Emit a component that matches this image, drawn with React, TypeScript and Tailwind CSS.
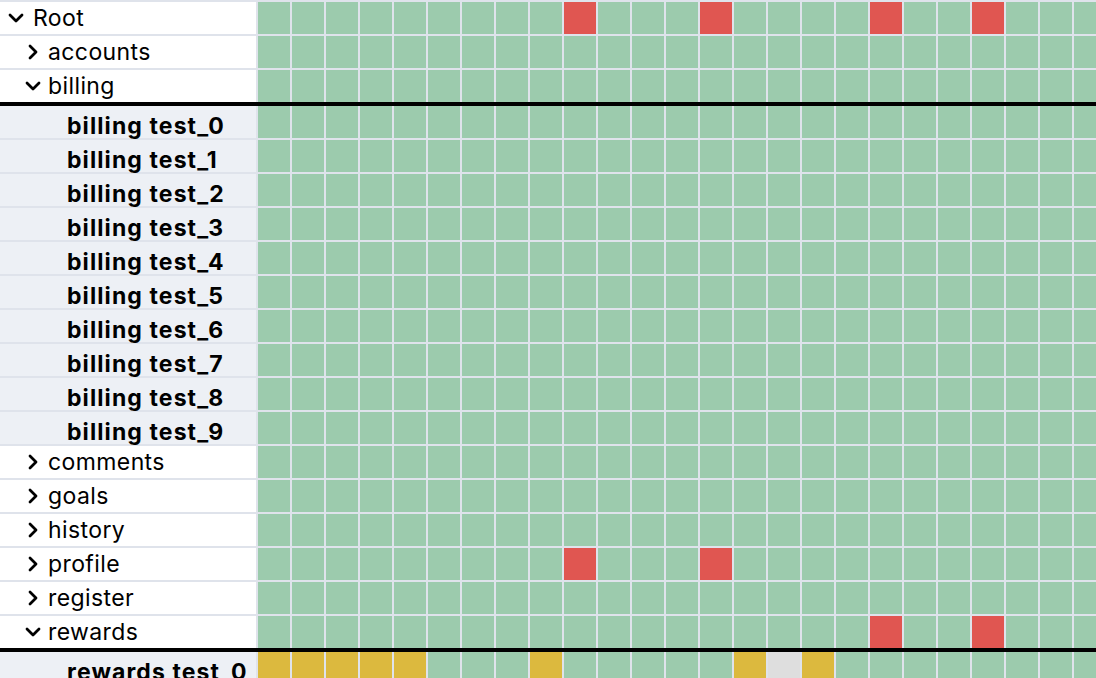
import { ChevronDown, ChevronRight } from 'lucide-react';

type Cell = 'g' | 'r' | 'y' | 'n';

interface Row {
  kind: 'node' | 'test' | 'sep';
  label?: string;
  depth?: number;
  open?: boolean;
  cells?: Cell[];
}

const COLS = 25;

const cellsWith = (marks: Record<number, Cell>): Cell[] =>
  Array.from({ length: COLS }, (_, i) => marks[i] ?? 'g');

const rows: Row[] = [
  { kind: 'node', label: 'Root', depth: 0, open: true, cells: cellsWith({ 9: 'r', 13: 'r', 18: 'r', 21: 'r' }) },
  { kind: 'node', label: 'accounts', depth: 1, cells: cellsWith({}) },
  { kind: 'node', label: 'billing', depth: 1, open: true, cells: cellsWith({}) },
  { kind: 'sep' },
  ...Array.from({ length: 10 }, (_, i) => ({
    kind: 'test' as const,
    label: `billing test_${i}`,
    cells: cellsWith({}),
  })),
  { kind: 'node', label: 'comments', depth: 1, cells: cellsWith({}) },
  { kind: 'node', label: 'goals', depth: 1, cells: cellsWith({}) },
  { kind: 'node', label: 'history', depth: 1, cells: cellsWith({}) },
  { kind: 'node', label: 'profile', depth: 1, cells: cellsWith({ 9: 'r', 13: 'r' }) },
  { kind: 'node', label: 'register', depth: 1, cells: cellsWith({}) },
  { kind: 'node', label: 'rewards', depth: 1, open: true, cells: cellsWith({ 18: 'r', 21: 'r' }) },
  { kind: 'sep' },
  {
    kind: 'test',
    label: 'rewards test_0',
    cells: cellsWith({ 0: 'y', 1: 'y', 2: 'y', 3: 'y', 4: 'y', 8: 'y', 14: 'y', 15: 'n', 16: 'y' }),
  },
];

const cellColor: Record<Cell, string> = {
  g: 'bg-[#9ccbad]',
  r: 'bg-[#e05651]',
  y: 'bg-[#dcb93e]',
  n: 'bg-[#dedede]',
};

function Cells({ cells }: { cells: Cell[] }) {
  return (
    <div className="flex gap-[2px] ml-[2px]">
      {cells.map((c, i) => (
        <div key={i} className={`w-8 h-8 shrink-0 ${cellColor[c]}`} />
      ))}
    </div>
  );
}

function App() {
  return (
    <div
      className="w-[1096px] h-[678px] overflow-hidden bg-[#dfe3eb] pt-[2px] text-[23px] text-black"
      style={{ fontFamily: 'Inter, "Noto Sans", sans-serif' }}
    >
      {rows.map((row, idx) => {
        if (row.kind === 'sep') {
          return <div key={idx} className="h-[4px] w-[1108px] bg-black" />;
        }
        const prevSep = rows[idx - 1]?.kind === 'sep';
        const spacing = prevSep || idx === 0 ? '' : 'mt-[2px]';

        if (row.kind === 'test') {
          return (
            <div key={idx} className={`flex h-8 ${spacing}`}>
              <div className="w-[256px] shrink-0 bg-[#edf0f5] pl-[67px] pt-[8px] flex items-center font-bold leading-none tracking-[1.1px] whitespace-nowrap">
                {row.label}
              </div>
              <Cells cells={row.cells!} />
            </div>
          );
        }

        return (
          <div key={idx} className={`flex h-8 ${spacing}`}>
            <div
              className={`w-[256px] shrink-0 bg-white flex items-center leading-none tracking-[0.4px] whitespace-nowrap ${
                row.depth === 0 ? 'pl-[4px] gap-[5px]' : 'pl-[21px] gap-[3px]'
              }`}
            >
              <span className="w-6 h-6 flex items-center justify-center">
                {row.open ? (
                  <ChevronDown size={24} strokeWidth={2.8} />
                ) : (
                  <ChevronRight size={24} strokeWidth={2.8} />
                )}
              </span>
              {row.label}
            </div>
            <Cells cells={row.cells!} />
          </div>
        );
      })}
    </div>
  );
}

export default App;
